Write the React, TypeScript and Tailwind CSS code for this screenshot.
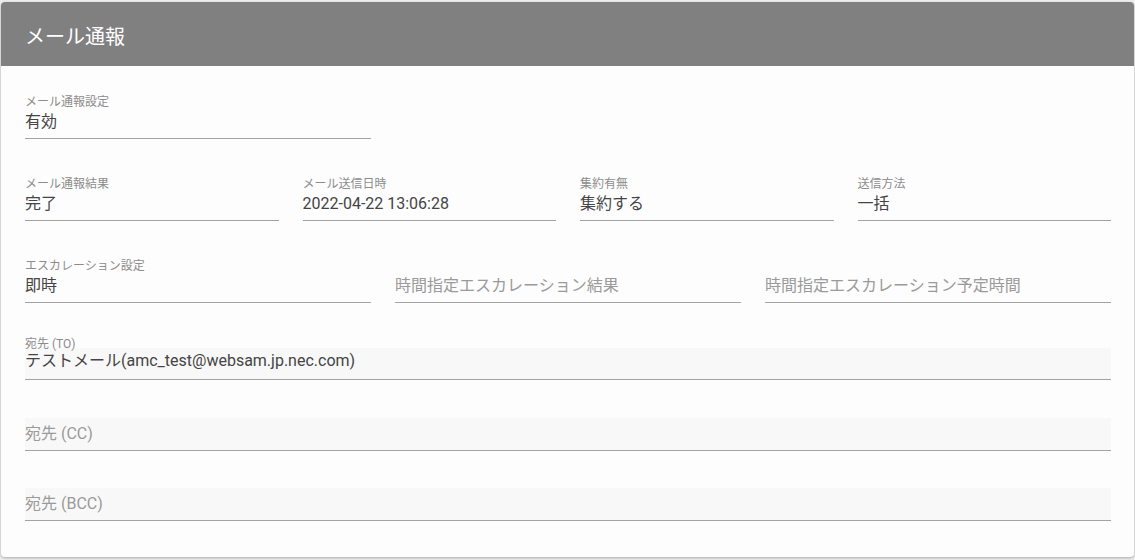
import React from "react";

const FONT = { fontFamily: 'Roboto, "Noto Sans CJK JP", sans-serif' };

function Field({ label, value, placeholder }: { label?: string; value?: string; placeholder?: string }) {
  return (
    <div className="flex flex-col border-b border-[#a3a3a3] pb-[4px]">
      <div className="h-[16px] text-[12px] leading-[16px] text-[#8c8c8c] whitespace-nowrap">{label ?? ""}</div>
      {value !== undefined ? (
        <div className="h-[24px] text-[16px] leading-[24px] text-[#444444] whitespace-nowrap">{value}</div>
      ) : (
        <div className="h-[24px] text-[16px] leading-[24px] text-[#9a9a9a] whitespace-nowrap">{placeholder}</div>
      )}
    </div>
  );
}

export default function App() {
  return (
    <div className="w-[1135px] h-[560px] bg-[#efefef] overflow-hidden" style={FONT}>
      <div className="ml-[1px] mt-[2px] w-[1133px] rounded-[4px] bg-[#fdfdfd] shadow-[0_1px_3px_rgba(0,0,0,0.3)] overflow-hidden">
        <div className="h-[64px] bg-[#808080] px-[24px] pt-[21px] text-[20px] leading-[28px] text-white">
          メール通報
        </div>
        <div className="pl-[24px] pr-[23px] pt-[28px] pb-[36px]">
          <div className="w-[346px]">
            <Field label="メール通報設定" value="有効" />
          </div>
          <div className="mt-[37px] grid grid-cols-4 gap-x-[24px]">
            <Field label="メール通報結果" value="完了" />
            <Field label="メール送信日時" value="2022-04-22 13:06:28" />
            <Field label="集約有無" value="集約する" />
            <Field label="送信方法" value="一括" />
          </div>
          <div className="mt-[37px] grid grid-cols-3 gap-x-[24px]">
            <Field label="エスカレーション設定" value="即時" />
            <Field placeholder="時間指定エスカレーション結果" />
            <Field placeholder="時間指定エスカレーション予定時間" />
          </div>
          <div className="mt-[33px]">
            <div className="h-[16px] text-[12px] leading-[16px] text-[#8c8c8c]">宛先 (TO)</div>
            <div className="-mt-[4px] h-[32px] bg-[#f8f8f8] border-b border-[#a3a3a3] pt-[1px] text-[16px] leading-[24px] text-[#444444] whitespace-nowrap">
              テストメール(amc_test@websam.jp.nec.com)
            </div>
          </div>
          <div className="mt-[38px] h-[33px] bg-[#f8f8f8] border-b border-[#a3a3a3] pt-[4px] text-[16px] leading-[24px] text-[#9a9a9a]">
            宛先 (CC)
          </div>
          <div className="mt-[37px] h-[33px] bg-[#f8f8f8] border-b border-[#a3a3a3] pt-[4px] text-[16px] leading-[24px] text-[#9a9a9a]">
            宛先 (BCC)
          </div>
        </div>
      </div>
    </div>
  );
}
